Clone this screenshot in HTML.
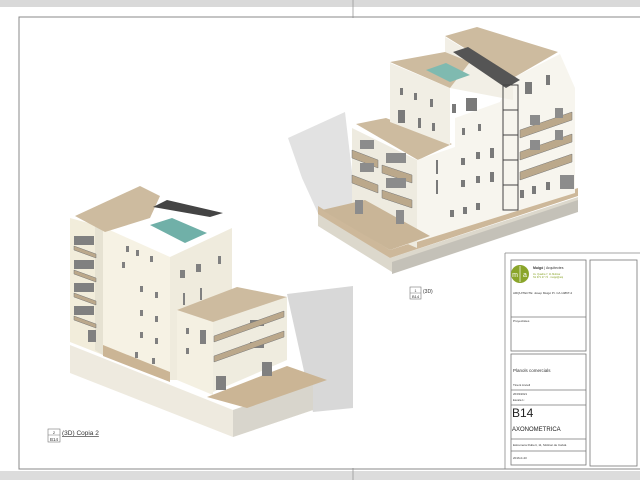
<!DOCTYPE html>
<html><head><meta charset="utf-8"><style>
html,body{margin:0;padding:0;background:#fff;width:640px;height:480px;overflow:hidden;font-family:"Liberation Sans",sans-serif}
svg{position:absolute;left:0;top:0}
</style></head><body>
<svg width="640" height="480" viewBox="0 0 640 480" xmlns="http://www.w3.org/2000/svg" font-family="Liberation Sans, sans-serif">
<rect x="0" y="0" width="640" height="7" fill="#d9d9d9"/>
<rect x="0" y="471" width="640" height="9" fill="#dcdcdc"/>
<line x1="353" y1="0" x2="353" y2="18" stroke="#999" stroke-width="0.8"/>
<line x1="353" y1="468" x2="353" y2="480" stroke="#999" stroke-width="0.8"/>
<path d="M640 17 H19 V469 H640" fill="none" stroke="#888" stroke-width="1"/>

<!-- RIGHT BUILDING -->
<polygon points="288,138 345,112 352,172 382,196 322,222 302,178" fill="#e2e2e2"/>
<polygon points="318,213 390,258 578,197 578,210 392,272 318,226" fill="#dcd8cc"/>
<polygon points="392,262 578,200 578,212 392,274" fill="#c4c1b8"/>
<polygon points="318,206 390,250 578,188 578,196 390,258 318,214" fill="#cdb89a"/>
<polygon points="352,128 417,160 417,248 352,220" fill="#eeebe0"/>
<polygon points="356,124 386,118 452,144 418,160" fill="#cdbb9f"/>
<polygon points="390,63 450,88 450,145 390,122" fill="#f1eee4"/>
<polygon points="417,160 455,147 455,118 500,102 513,78 560,54 575,88 575,193 417,242" fill="#f7f5ee"/>
<polygon points="445,37 513,78 513,100 450,88 445,60" fill="#f2efe6"/>
<polygon points="445,36 477,27 558,52 513,78" fill="#cdbb9f"/>
<polygon points="390,62 445,52 470,62 450,88" fill="#cdbb9f"/>
<polygon points="426,70 446,63 470,75 450,82" fill="#7fbab0"/>
<polygon points="453,52 468,47 520,80 506,88" fill="#555"/>
<rect x="503" y="85" width="15" height="125" fill="none" stroke="#444" stroke-width="1"/>
<line x1="503" y1="110" x2="518" y2="110" stroke="#444"/><line x1="503" y1="135" x2="518" y2="135" stroke="#444"/><line x1="503" y1="160" x2="518" y2="160" stroke="#444"/><line x1="503" y1="185" x2="518" y2="185" stroke="#444"/>
<polygon points="322,210 390,250 430,236 365,200" fill="#c9b597"/>
<g fill="#7a7a7a">
<rect x="400" y="88" width="3" height="7"/><rect x="414" y="93" width="3" height="7"/><rect x="430" y="99" width="3" height="8"/>
<rect x="398" y="110" width="7" height="13"/><rect x="418" y="118" width="3" height="10"/><rect x="432" y="123" width="3" height="8"/>
<rect x="452" y="104" width="4" height="9"/><rect x="466" y="98" width="11" height="13"/><rect x="525" y="82" width="7" height="12"/><rect x="546" y="75" width="4" height="10"/>
<rect x="462" y="128" width="3" height="7"/><rect x="478" y="124" width="3" height="7"/><rect x="436" y="160" width="2" height="14"/><rect x="436" y="180" width="2" height="14"/>
<rect x="461" y="158" width="4" height="7"/><rect x="476" y="152" width="4" height="7"/><rect x="490" y="148" width="4" height="10"/>
<rect x="461" y="180" width="4" height="7"/><rect x="476" y="176" width="4" height="7"/><rect x="490" y="172" width="4" height="10"/>
<rect x="450" y="210" width="4" height="7"/><rect x="463" y="207" width="4" height="7"/><rect x="476" y="203" width="4" height="7"/>
<rect x="520" y="190" width="4" height="8"/><rect x="532" y="186" width="4" height="8"/><rect x="546" y="182" width="4" height="8"/>
</g>
<g fill="#bba88b" stroke="#777" stroke-width="0.5">
<polygon points="352,150 378,160 378,168 352,158"/><polygon points="382,165 412,175 412,183 382,173"/>
<polygon points="352,175 378,185 378,193 352,183"/><polygon points="382,190 412,200 412,208 382,198"/>
<polygon points="520,130 572,112 572,120 520,138"/><polygon points="520,152 572,134 572,142 520,160"/><polygon points="520,172 572,154 572,162 520,180"/>
</g>
<g fill="#8c8c8c"><rect x="360" y="140" width="14" height="9"/><rect x="386" y="153" width="20" height="10"/><rect x="360" y="163" width="14" height="9"/><rect x="386" y="178" width="20" height="10"/><rect x="355" y="200" width="8" height="14"/><rect x="396" y="210" width="8" height="14"/><rect x="530" y="115" width="10" height="10"/><rect x="555" y="108" width="8" height="10"/><rect x="530" y="140" width="10" height="10"/><rect x="555" y="130" width="8" height="10"/><rect x="560" y="175" width="14" height="14"/></g>

<!-- LEFT BUILDING -->
<polygon points="287,294 353,286 353,408 313,412" fill="#d8d8d8"/>
<polygon points="70,345 233,410 313,383 313,410 233,437 70,373" fill="#eeeadf"/>
<polygon points="233,410 313,383 313,410 233,437" fill="#d8d5cc"/>
<polygon points="70,218 103,227 103,355 70,342" fill="#f2eddb"/>
<polygon points="103,227 170,257 170,380 103,355" fill="#f6f2e4"/>
<polygon points="95,222 103,227 103,355 95,350" fill="#e6e2d2"/>
<polygon points="170,257 232,228 232,300 177,310 177,380 170,380" fill="#efebdd"/>
<polygon points="75,216 140,186 160,196 150,218 105,232" fill="#cdbb9f"/>
<polygon points="150,225 172,218 207,233 185,243" fill="#70b0a8"/>
<polygon points="153,207 167,200 223,213 210,217" fill="#444"/>
<polygon points="177,310 213,322 213,395 177,380" fill="#f4f0e2"/>
<polygon points="213,322 287,297 287,360 213,392" fill="#efecdf"/>
<polygon points="177,310 237,287 287,297 213,322" fill="#cdbb9f"/>
<polygon points="207,397 287,366 327,380 247,408" fill="#cbb595"/>
<polygon points="103,345 170,372 170,382 103,356" fill="#cbb595"/>
<g fill="#808080">
<rect x="74" y="236" width="20" height="9"/><rect x="74" y="260" width="20" height="9"/><rect x="74" y="283" width="20" height="9"/><rect x="74" y="306" width="20" height="9"/><rect x="88" y="330" width="8" height="12"/>
<rect x="126" y="246" width="3" height="6"/><rect x="136" y="250" width="3" height="6"/><rect x="150" y="256" width="3" height="6"/><rect x="122" y="262" width="3" height="6"/>
<rect x="140" y="286" width="3" height="6"/><rect x="155" y="292" width="3" height="6"/><rect x="140" y="310" width="3" height="6"/><rect x="155" y="316" width="3" height="6"/>
<rect x="140" y="332" width="3" height="6"/><rect x="155" y="338" width="3" height="6"/><rect x="135" y="352" width="3" height="6"/><rect x="152" y="358" width="3" height="6"/>
<rect x="180" y="270" width="5" height="8"/><rect x="196" y="264" width="5" height="8"/><rect x="218" y="256" width="3" height="8"/>
<rect x="183" y="293" width="2" height="12"/><rect x="200" y="288" width="2" height="12"/><rect x="186" y="328" width="3" height="6"/><rect x="186" y="348" width="3" height="6"/>
<rect x="200" y="330" width="6" height="14"/><rect x="250" y="320" width="14" height="6"/><rect x="250" y="342" width="14" height="6"/>
<rect x="216" y="376" width="10" height="14"/><rect x="262" y="362" width="10" height="14"/>
</g>
<g fill="#bba88b" stroke="#777" stroke-width="0.5">
<polygon points="74,246 96,254 96,258 74,250"/><polygon points="74,270 96,278 96,282 74,274"/><polygon points="74,293 96,301 96,305 74,297"/><polygon points="74,316 96,324 96,328 74,320"/>
<polygon points="214,336 284,311 284,317 214,342"/><polygon points="214,356 284,331 284,337 214,362"/>
</g>

<!-- labels -->
<rect x="410" y="287" width="11" height="12" fill="#fff" stroke="#777" stroke-width="0.6"/>
<line x1="410" y1="293" x2="421" y2="293" stroke="#777" stroke-width="0.5"/>
<text x="415.5" y="292" font-size="3.5" text-anchor="middle" fill="#333">1</text>
<text x="415.5" y="298" font-size="4" text-anchor="middle" fill="#333">B14</text>
<text x="423" y="293" font-size="5" fill="#333">(3D)</text>
<rect x="48" y="429" width="12" height="13" fill="#fff" stroke="#777" stroke-width="0.6"/>
<line x1="48" y1="435" x2="60" y2="435" stroke="#777" stroke-width="0.5"/>
<text x="54" y="434" font-size="4" text-anchor="middle" fill="#333">2</text>
<text x="54" y="441" font-size="4.5" text-anchor="middle" fill="#333">B14</text>
<text x="62" y="435" font-size="6.5" fill="#333" text-decoration="underline">(3D) Copia 2</text>

<!-- title block -->
<line x1="505" y1="253" x2="640" y2="253" stroke="#888" stroke-width="0.8"/>
<line x1="505" y1="253" x2="505" y2="469" stroke="#888" stroke-width="0.8"/>
<g fill="none" stroke="#777" stroke-width="0.8">
<rect x="511" y="260" width="75" height="91"/>
<line x1="511" y1="317" x2="586" y2="317"/>
<rect x="511" y="354" width="75" height="111"/>
<line x1="511" y1="390" x2="586" y2="390"/>
<line x1="511" y1="405" x2="586" y2="405"/>
<line x1="511" y1="439" x2="586" y2="439"/>
<line x1="511" y1="451" x2="586" y2="451"/>
<rect x="590" y="260" width="47" height="206"/>
</g>
<circle cx="520" cy="274" r="9" fill="#8aa52a"/>
<line x1="520" y1="266" x2="520" y2="282" stroke="#fff" stroke-width="0.7"/>
<text x="515" y="277" font-size="7" fill="#fff" text-anchor="middle">m</text>
<text x="525" y="277" font-size="7" fill="#fff" text-anchor="middle">a</text>
<text x="533" y="269" font-size="3.5" fill="#333"><tspan font-weight="bold">Muigó</tspan> | Arquitectes</text>
<text x="533" y="275" font-size="2.5" fill="#8aa52a">Av. Quadra 7, 11 Molinar</text>
<text x="533" y="278" font-size="2.5" fill="#8aa52a">Tel 971 27 74 · muigo@arq</text>
<text x="513" y="294" font-size="3" fill="#333">ARQUITECTE: Josep Muigó Pr. CA 1486T-2</text>
<text x="513" y="322" font-size="3" fill="#333">Proyectistes</text>
<text x="513" y="372" font-size="4.5" fill="#333">Planols comercials</text>
<text x="513" y="386" font-size="3" fill="#333">Tinent Ancell</text>
<text x="513" y="395" font-size="2.8" fill="#333">26/03/2021</text>
<text x="513" y="401" font-size="2.8" fill="#333">Escala 1:</text>
<text x="512" y="417" font-size="12" fill="#222">B14</text>
<text x="512" y="431" font-size="6" fill="#222">AXONOMETRICA</text>
<text x="513" y="446" font-size="3" fill="#333">Estremera Rubert, 11, Molinar de Calvià</text>
<text x="513" y="459" font-size="3" fill="#333">2016-0-43</text>
</svg>
</body></html>
